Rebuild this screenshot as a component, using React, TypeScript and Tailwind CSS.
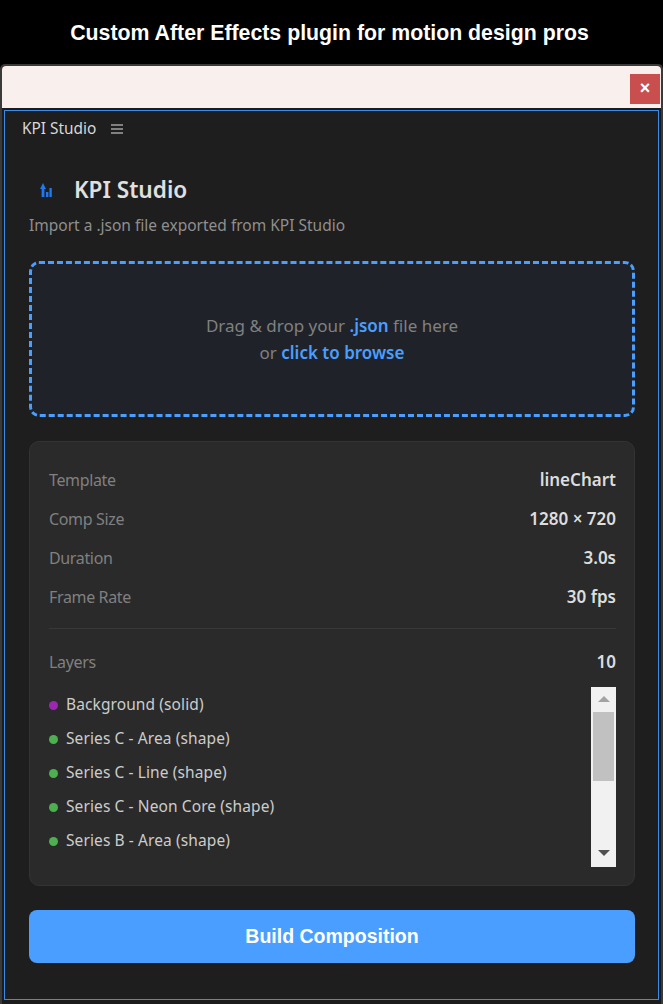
const font = "font-['Noto_Sans',sans-serif]"

const stats = [
  { label: "Template", value: "lineChart" },
  { label: "Comp Size", value: "1280 × 720" },
  { label: "Duration", value: "3.0s" },
  { label: "Frame Rate", value: "30 fps" },
]

const layers = [
  { name: "Background (solid)", dot: "bg-[#9c27b0]" },
  { name: "Series C - Area (shape)", dot: "bg-[#4caf50]" },
  { name: "Series C - Line (shape)", dot: "bg-[#4caf50]" },
  { name: "Series C - Neon Core (shape)", dot: "bg-[#4caf50]" },
  { name: "Series B - Area (shape)", dot: "bg-[#4caf50]" },
  { name: "Series B - Line (shape)", dot: "bg-[#4caf50]" },
  { name: "Series B - Neon Core (shape)", dot: "bg-[#4caf50]" },
]

function Scrollbar() {
  return (
    <div className="flex w-[25px] shrink-0 flex-col items-center bg-[#f1f1f1]">
      <svg width="12" height="25" viewBox="0 0 12 25" className="shrink-0">
        <path d="M6 9 L12 15 L0 15 Z" fill="#a3a3a3" />
      </svg>
      <div className="h-[69px] w-[21px] shrink-0 bg-[#c1c1c1]" />
      <div className="flex-1" />
      <svg width="12" height="25" viewBox="0 0 12 25" className="shrink-0">
        <path d="M0 8 L12 8 L6 14 Z" fill="#505050" />
      </svg>
    </div>
  )
}

export default function App() {
  return (
    <div className={`flex h-[1004px] w-[663px] flex-col overflow-hidden bg-black ${font}`}>
      {/* Caption */}
      <div className="flex h-[64px] shrink-0 items-center justify-center pr-[4px] pt-[4px] font-['Liberation_Sans',sans-serif] text-[21.3px] font-bold text-white">
        Custom After Effects plugin for motion design pros
      </div>

      {/* Window */}
      <div className="flex min-h-0 flex-1 flex-col rounded-t-[5px] border-x-2 border-t-2 border-[#3a3a3a] bg-[#1c1c1c]">
        <div className="flex h-[42px] shrink-0 justify-end rounded-t-[4px] bg-[#f9f0ee] pr-[1px] pt-[8px]">
          <div className="flex h-[30px] w-[30px] items-center justify-center bg-[#c94f4f] pb-[1px] font-['Liberation_Sans',sans-serif] text-[18px] font-bold text-white">
            ×
          </div>
        </div>

        {/* Panel */}
        <div className="mx-[2px] mb-[4px] mt-[2px] flex min-h-0 flex-1 flex-col border border-[#3c8be8] bg-[#1e1e1e]">
          <div className="flex h-[36px] shrink-0 items-center gap-[15px] pl-[17px]">
            <span className="text-[15.4px] text-[#d8d8d8]">KPI Studio</span>
            <div className="flex w-[12px] flex-col gap-[2px]">
              <div className="h-[2px] bg-[#808080]" />
              <div className="h-[2px] bg-[#808080]" />
              <div className="h-[2px] bg-[#808080]" />
            </div>
          </div>

          <div className="flex flex-1 flex-col pl-[24px] pr-[23px] pt-[25px]">
            {/* Title */}
            <div className="flex h-[36px] items-center gap-[22px] pl-[11px]">
              <svg width="12" height="16" viewBox="0 0 12 16" className="shrink-0">
                <path d="M0 7 L3 1 L6 7 L4.4 7 L4.4 15 L1.6 15 L1.6 7 Z" fill="#1f78f0" />
                <rect x="6" y="10" width="2.4" height="5" fill="#1f78f0" />
                <rect x="9.4" y="6" width="2.4" height="9" fill="#1f78f0" />
              </svg>
              <h1 className="text-[22.6px] font-semibold text-[#e0e0e0]">KPI Studio</h1>
            </div>
            <p className="mt-[6px] text-[15.5px] leading-[22px] text-[#8f8f8f]">
              Import a .json file exported from KPI Studio
            </p>

            {/* Drop zone */}
            <div className="mt-[25px] flex h-[156px] shrink-0 flex-col items-center justify-center rounded-[10px] border-[3px] border-dashed border-[#4a9eff] bg-[#1f2329] text-[17px] leading-[27px] text-[#808080]">
              <div>
                Drag &amp; drop your <span className="font-semibold text-[#4a9eff]">.json</span> file here
              </div>
              <div>
                or <span className="font-semibold text-[#4a9eff]">click to browse</span>
              </div>
            </div>

            {/* Details card */}
            <div className="mt-[24px] h-[445px] shrink-0 rounded-[10px] border border-[#333333] bg-[#2a2a2a] pl-[19px] pr-[18px] pt-[18px]">
              {stats.map((s) => (
                <div key={s.label} className="flex h-[39px] items-center justify-between">
                  <span className="text-[16px] tracking-[-0.35px] text-[#808080]">{s.label}</span>
                  <span className="text-[17px] font-semibold text-[#dddddd]">{s.value}</span>
                </div>
              ))}
              <div className="mt-[12px] h-px bg-[#383838]" />
              <div className="mt-[13px] flex h-[39px] items-center justify-between">
                <span className="text-[16px] tracking-[-0.35px] text-[#808080]">Layers</span>
                <span className="text-[17px] font-semibold text-[#dddddd]">10</span>
              </div>
              <div className="mt-[6px] flex h-[180px] overflow-hidden">
                <div className="min-w-0 flex-1 pt-[1px]">
                  {layers.map((l) => (
                    <div key={l.name} className="flex h-[34px] items-center gap-[8px] text-[15.5px] tracking-[0.1px] text-[#cccccc]">
                      <span className={`h-[9px] w-[9px] shrink-0 rounded-full ${l.dot}`} />
                      {l.name}
                    </div>
                  ))}
                </div>
                <Scrollbar />
              </div>
            </div>

            {/* Action */}
            <button className="mt-[24px] h-[53px] shrink-0 rounded-[8px] bg-[#4a9eff] font-['Liberation_Sans',sans-serif] text-[19.5px] font-bold text-white">
              Build Composition
            </button>
          </div>
        </div>
      </div>
    </div>
  )
}
